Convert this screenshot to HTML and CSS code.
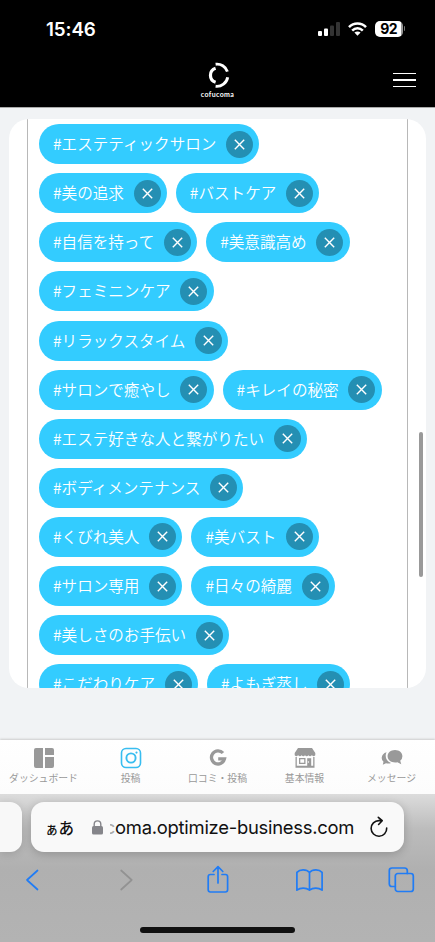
FILE: index.html
```html
<!DOCTYPE html>
<html lang="ja">
<head>
<meta charset="utf-8">
<meta name="viewport" content="width=device-width, initial-scale=1">
<title>cofucoma</title>
<link rel="stylesheet" href="styles.css">
</head>
<body>
<svg width="0" height="0" class="defs" aria-hidden="true">
  <symbol id="x" viewBox="0 0 27 27"><path d="M8.8 8.8 18.2 18.2M18.2 8.8 8.8 18.2" fill="none" stroke="#fff" stroke-width="1.4"/></symbol>
</svg>
<header class="top">
  <div class="status">
    <span class="time">15:46</span>
    <div class="indicators">
      <svg width="23" height="15" viewBox="0 0 23 15"><g fill="#fff"><rect x="0" y="9" width="4" height="5" rx="1"/><rect x="6" y="6.5" width="4" height="7.5" rx="1"/></g><g fill="#333"><rect x="12" y="3.5" width="4" height="10.5" rx="1"/><rect x="18" y="0" width="4" height="14" rx="1"/></g></svg>
      <svg class="wifi" width="19" height="14" viewBox="0 0 19 14"><g fill="none" stroke="#fff" stroke-width="2.5"><path d="M1 5.1C5.7.2 13.3.2 18 5.1"/><path d="M4.2 8.6C7.2 5.5 11.8 5.5 14.8 8.6"/></g><path d="M9.5 13.7 6.4 10.6C8.2 9 10.8 9 12.6 10.6Z" fill="#fff"/></svg>
      <span class="battery">92</span><span class="battery-tip"></span>
    </div>
  </div>
  <div class="brandbar">
    <div class="brand">
      <svg width="24" height="27" viewBox="1.2 0 24 27"><g fill="none" stroke="#fff"><path d="M10.8 2.2A11 11 0 0 1 22.6 9.6M22.9 15.2A11 11 0 0 1 10.8 24.3" stroke-width="2.9"/><path d="M10.8 6.2A7.4 7.4 0 0 0 10.8 20.3" stroke-width="3.2"/></g></svg>
      <span class="brand-name">cofucoma</span>
    </div>
    <div class="menu"><i></i><i></i><i></i></div>
  </div>
</header>
<main class="page">
  <section class="card">
    <div class="tags">
      <span class="tag">#エステティックサロン<svg class="del"><use href="#x"/></svg></span>
      <span class="tag">#美の追求<svg class="del"><use href="#x"/></svg></span>
      <span class="tag">#バストケア<svg class="del"><use href="#x"/></svg></span>
      <span class="tag">#自信を持って<svg class="del"><use href="#x"/></svg></span>
      <span class="tag">#美意識高め<svg class="del"><use href="#x"/></svg></span>
      <span class="tag">#フェミニンケア<svg class="del"><use href="#x"/></svg></span>
      <span class="tag">#リラックスタイム<svg class="del"><use href="#x"/></svg></span>
      <span class="tag">#サロンで癒やし<svg class="del"><use href="#x"/></svg></span>
      <span class="tag">#キレイの秘密<svg class="del"><use href="#x"/></svg></span>
      <span class="tag">#エステ好きな人と繋がりたい<svg class="del"><use href="#x"/></svg></span>
      <span class="tag">#ボディメンテナンス<svg class="del"><use href="#x"/></svg></span>
      <span class="tag">#くびれ美人<svg class="del"><use href="#x"/></svg></span>
      <span class="tag">#美バスト<svg class="del"><use href="#x"/></svg></span>
      <span class="tag">#サロン専用<svg class="del"><use href="#x"/></svg></span>
      <span class="tag">#日々の綺麗<svg class="del"><use href="#x"/></svg></span>
      <span class="tag">#美しさのお手伝い<svg class="del"><use href="#x"/></svg></span>
      <span class="tag">#こだわりケア<svg class="del"><use href="#x"/></svg></span>
      <span class="tag">#よもぎ蒸し<svg class="del"><use href="#x"/></svg></span>
    </div>
    <div class="scrollbar"></div>
  </section>
</main>
<nav class="tabs">
  <div class="tab"><svg width="22" height="22" viewBox="0 0 22 22" fill="#999"><path d="M3 1H10V21H3Q1 21 1 19V3Q1 1 3 1ZM12 1H19Q21 1 21 3V8H12ZM12 10H21V19Q21 21 19 21H12Z"/></svg><span>ダッシュボード</span></div>
  <div class="tab"><svg width="22" height="22" viewBox="0 0 22 22" fill="none" stroke="#38bdf0" stroke-width="1.6"><rect x="1.5" y="1.5" width="19" height="19" rx="4.5"/><circle cx="11" cy="11" r="4.6" stroke-width="1.9"/><circle cx="16.5" cy="5.6" r="1.1" fill="#38bdf0" stroke="none"/></svg><span>投稿</span></div>
  <div class="tab"><svg width="22" height="22" viewBox="0 0 22 22" fill="none" stroke="#999" stroke-width="3.3"><path d="M16 6A6.6 6.6 0 1 0 17.5 11.9H11.2"/></svg><span>口コミ・投稿</span></div>
  <div class="tab"><svg width="22" height="22" viewBox="0 0 22 22" fill="#999"><path d="M4 1H18L21.3 6V8.2Q19.5 10 17.8 8.3Q16 10 14.4 8.3Q12.7 10 11 8.3Q9.3 10 7.6 8.3Q6 10 4.2 8.3Q2.5 10 .7 8.2V6Z"/><path d="M1.5 10H2.8V18.8H19.2V10H20.5V20.8H1.5Z"/><path d="M5 11H11.5V17H5ZM6.3 12.3V15.7H10.2V12.3Z" fill-rule="evenodd"/><path d="M13.2 11.2H17.2V19H13.2Z"/><circle cx="14.4" cy="15" r=".7" fill="#fff"/></svg><span>基本情報</span></div>
  <div class="tab"><svg width="22" height="22" viewBox="0 0 22 22" fill="#999"><path d="M14 3C18.4 3 21.4 5.8 21.4 9.2Q21.4 12 19.2 13.8L20.3 17.2 16.4 15.2C10.8 16.2 6.6 13.3 6.6 9.2C6.6 5.8 9.6 3 14 3Z"/><path d="M5.5 5.2C2.6 6 .7 8.2.7 11Q.7 13.2 2.5 14.8L1.8 17.7 5 16.2Q7.8 17 10 16C5 14.4 3.6 9.2 5.5 5.2Z"/></svg><span>メッセージ</span></div>
</nav>
<footer class="browser">
  <div class="addresses">
    <div class="previous"></div>
    <div class="address">
      <span class="aa"><small>ぁ</small>あ</span>
      <svg class="lock" width="11" height="15" viewBox="0 0 11 15"><rect x="0" y="6" width="11" height="8.5" rx="1.6" fill="#85858a"/><path d="M2.2 7V4.2A3.3 3.3 0 0 1 8.8 4.2V7" fill="none" stroke="#85858a" stroke-width="1.4"/></svg>
      <span class="url"><span class="fade">c</span><span class="host">oma.optimize-business.com</span></span>
      <svg class="reload" width="20" height="22" viewBox="0 0 20 22" fill="none" stroke="#111" stroke-width="1.6" stroke-linecap="round" stroke-linejoin="round"><path d="M17.7 12A7.8 7.8 0 1 1 10 4.6H13M9.3 1.3 13.2 4.7 9.6 8.5"/></svg>
    </div>
  </div>
  <div class="tools">
    <svg width="28" height="30" viewBox="0 0 28 30"><path d="M18.5 5.5 8 15 18.5 24.5"/></svg>
    <svg class="off" width="28" height="30" viewBox="0 0 28 30"><path d="M10.2 5.5 20.7 15 10.2 24.5"/></svg>
    <svg width="28" height="30" viewBox="0 0 28 30"><path d="M10 9.5H6.4Q4.2 9.5 4.2 11.7V24.8Q4.2 27 6.4 27H21.4Q23.6 27 23.6 24.8V11.7Q23.6 9.5 21.4 9.5H18M14 18V2M9.2 6.5 14 1.7 18.8 6.5"/></svg>
    <svg width="28" height="30" viewBox="0 0 28 30"><path d="M13.5 7.5C10.5 4 4 4 .9 7.3V25.2C4.5 22.3 10 22.3 13.5 25.2C17 22.3 22.5 22.3 26.1 25.2V7.3C23 4 16.5 4 13.5 7.5ZM13.5 7.5V25"/></svg>
    <svg width="28" height="30" viewBox="0 0 28 30"><rect x="7.3" y="8.5" width="18" height="18" rx="2.5"/><path d="M7.3 21.5H4Q1.3 21.5 1.3 18.8V5.7Q1.3 3 4 3H16.6Q19.3 3 19.3 5.7V8.5"/></svg>
  </div>
  <div class="home"></div>
</footer>
</body>
</html>
```

FILE: styles.css
```css
* { box-sizing: border-box; }
body {
  margin: 0;
  width: 435px;
  height: 942px;
  overflow: hidden;
  display: flex;
  flex-direction: column;
  background: #f1f3f5;
  font-family: "Noto Sans CJK JP", sans-serif;
}
svg { display: block; flex: none; }
.defs { position: absolute; }

.top { height: 108px; flex: none; background: #000; border-bottom: 1px solid #aaa; }
.status { height: 54px; display: flex; justify-content: space-between; padding: 0 30px 0 46px; color: #fff; }
.time { font: 600 18.8px/24px Inter, sans-serif; padding-top: 18px; letter-spacing: -.1px; }
.indicators { display: flex; align-items: flex-start; padding-top: 22px; }
.wifi { margin: 0 8px 0 7px; }
.battery { width: 28px; height: 16px; margin-top: -1px; border-radius: 5px; background: linear-gradient(90deg, #fff 92%, #999 92%); color: #000; font: 700 14px/16px Inter, sans-serif; text-align: center; letter-spacing: -.6px; }
.battery-tip { width: 1.5px; height: 5px; margin: 4px 0 0 1px; border-radius: 0 2px 2px 0; background: #777; }
.brandbar { height: 53px; display: grid; grid-template-columns: 1fr auto 1fr; padding-right: 19px; }
.brand { grid-column: 2; display: flex; flex-direction: column; align-items: center; padding: 8px 0 0 19px; }
.brand-name { color: #fff; font: 700 7px/9px Lato, sans-serif; margin-top: 1px; letter-spacing: .4px; }
.menu { justify-self: end; width: 23px; display: flex; flex-direction: column; gap: 5.2px; padding-top: 18.5px; }
.menu i { height: 1.5px; background: #fff; }

.page { height: 632px; flex: none; padding: 10.5px 9px 0; }
.card { position: relative; height: 569px; overflow: hidden; padding: 0 18px; border-radius: 20px; background: #fff; }
.tags { width: 381px; height: 620px; display: flex; flex-wrap: wrap; align-content: flex-start; gap: 9.1px 9px; padding: 5.7px 18px 0 11px; border: solid #b8b8b8; border-width: 0 1px; }
.tag { height: 40px; display: flex; align-items: center; padding: 0 6.2px 2px 14px; border-radius: 20px; background: #33ccff; color: #fff; font-size: 15.58px; line-height: 36px; white-space: nowrap; font-weight: 350; }
.del { width: 27px; height: 27px; margin: 2px 0 0 9.8px; border-radius: 50%; background: #248fb3; }
.scrollbar { position: absolute; right: 3.5px; top: 313.5px; width: 3.5px; height: 145px; border-radius: 2px; background: #999; }

.tabs { height: 54px; flex: none; display: grid; grid-template-columns: repeat(5, 1fr); background: linear-gradient(#fff, #fcfcfc); box-shadow: 0 -1px 2px #ccc; }
.tab { display: flex; flex-direction: column; align-items: center; padding-top: 7px; color: #999; font-size: 9.85px; line-height: 16px; white-space: nowrap; }
.tab span { margin-top: 1px; }

.browser { flex: 1; display: flex; flex-direction: column; background: linear-gradient(#dcdcdc, #bcbcbc 35px, #b0b0b0 75px, #b3b3b3); z-index: 1; }
.addresses { display: flex; gap: 9px; padding-top: 8px; }
.previous { width: 22px; height: 50px; border-radius: 0 12px 12px 0; background: #f8f8f8; box-shadow: 0 2px 8px #0002; }
.address { width: 373px; height: 50px; display: flex; align-items: center; padding: 0 15px 0 14px; border-radius: 13px; background: #f9f9f9; box-shadow: 0 2px 10px #0003; color: #111; }
.aa { width: 47px; font-size: 15.5px; white-space: nowrap; font-weight: 500; }
.aa small { font-size: 13.5px; }
.url { display: flex; margin-left: 7px; font: 400 18.4px/26px Inter, sans-serif; white-space: nowrap; letter-spacing: -.25px; }
.fade { width: 5px; display: flex; justify-content: flex-end; overflow: hidden; color: #aaa; }
.host { width: 239px; }
.reload { margin-left: auto; }
.tools { display: flex; justify-content: space-between; padding: 12.5px 19px 0; }
.tools svg { fill: none; stroke: #207cf5; stroke-width: 1.7; stroke-linecap: round; stroke-linejoin: round; }
.tools .off { stroke: #929292; }
.home { width: 155px; height: 6px; margin: auto auto 9px; border-radius: 3px; background: #111; }
```
